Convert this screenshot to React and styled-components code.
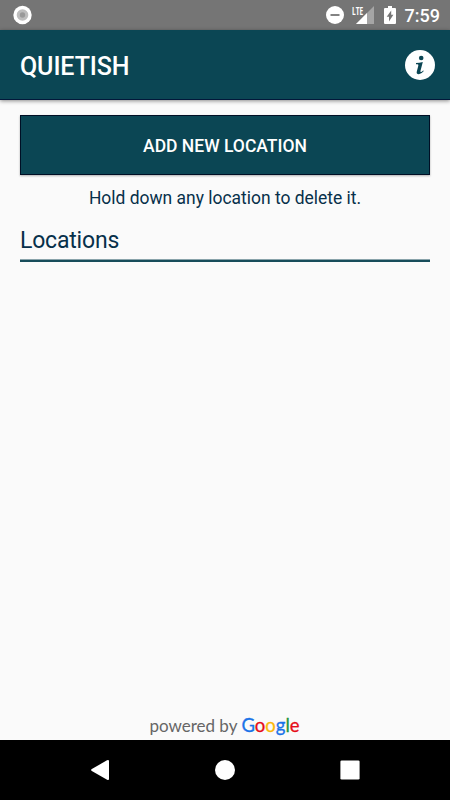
import React from 'react';
import styled, { createGlobalStyle } from 'styled-components';

const GlobalStyle = createGlobalStyle`
  * {
    box-sizing: border-box;
  }
  body {
    margin: 0;
    background-color: #fafafa;
    font-family: Roboto, 'Liberation Sans', sans-serif;
  }
  svg {
    display: block;
  }
`;

const Screen = styled.div`
  width: 450px;
  height: 800px;
  display: flex;
  flex-direction: column;
  overflow: hidden;
  background-color: #fafafa;
`;

const StatusBar = styled.div`
  height: 30px;
  flex-shrink: 0;
  display: flex;
  align-items: center;
  justify-content: space-between;
  padding: 0 10px 0 13px;
  background-color: #757575;
`;

const StatusIcons = styled.div`
  display: flex;
  align-items: center;
`;

const Network = styled.div`
  display: flex;
  align-items: flex-start;
  margin-left: 8px;
  height: 18px;
  svg {
    margin-left: -8px;
  }
`;

const NetworkType = styled.span`
  width: 12px;
  font-family: 'Open Sans', sans-serif;
  font-size: 11px;
  font-weight: 700;
  line-height: 10px;
  white-space: nowrap;
  color: white;
  transform: scaleX(0.6);
  transform-origin: left;
`;

const Battery = styled.div`
  margin-left: 10px;
`;

const Clock = styled.span`
  margin-left: 9px;
  padding-top: 2px;
  font-size: 18px;
  font-weight: 500;
  line-height: 28px;
  color: white;
`;

const Header = styled.header`
  height: 70px;
  flex-shrink: 0;
  display: flex;
  align-items: center;
  justify-content: space-between;
  padding: 0 15px 0 20px;
  background-color: #0b4654;
  border-bottom: 1px solid #02183a;
  box-shadow: 0 1px 4px rgba(0, 0, 0, 0.45);
`;

const Title = styled.h1`
  margin: 4px 0 0;
  font-size: 25px;
  font-weight: 500;
  line-height: 30px;
  letter-spacing: -0.1px;
  color: white;
`;

const InfoButton = styled.button`
  padding: 0;
  border: none;
  background: none;
  cursor: pointer;
`;

const Content = styled.main`
  flex: 1;
  display: flex;
  flex-direction: column;
  padding: 15px 20px 0;
`;

const AddButton = styled.button`
  height: 60px;
  padding: 2px 0 0;
  border: 1px solid #000f25;
  background-color: #0b4654;
  box-shadow: 0 1px 2px rgba(0, 0, 0, 0.3);
  color: white;
  font-family: inherit;
  font-size: 17.5px;
  font-weight: 500;
  cursor: pointer;
`;

const Hint = styled.p`
  margin: 12px 0 0;
  font-size: 17.45px;
  line-height: 22px;
  text-align: center;
  color: #07304a;
`;

const SectionTitle = styled.h2`
  margin: 17px 0 0;
  height: 36px;
  border-bottom: 2px solid #174c5a;
  box-shadow: inset 0 -1px rgba(23, 76, 90, 0.5);
  font-size: 23px;
  font-weight: 400;
  line-height: 29px;
  letter-spacing: -0.2px;
  color: #07304a;
`;

const PoweredBy = styled.div`
  height: 30px;
  display: flex;
  justify-content: center;
  align-items: baseline;
  gap: 4px;
  padding-right: 1px;
  font-family: Lato, sans-serif;
  font-size: 17px;
  line-height: 30px;
  color: #666;
`;

const Google = styled.span`
  font-size: 18.5px;
  -webkit-text-stroke: 0.3px;
`;

const Letter = styled.span`
  color: ${(props) => props.$color};
`;

const NavBar = styled.nav`
  height: 60px;
  flex-shrink: 0;
  display: flex;
  align-items: center;
  justify-content: center;
  background-color: black;
`;

const NavButton = styled.button`
  width: 125px;
  height: 60px;
  display: flex;
  align-items: center;
  justify-content: center;
  padding: 0;
  border: none;
  background: none;
`;

const googleLetters = [
  ['G', '#1a73e8'],
  ['o', '#e60c18'],
  ['o', '#fbb80a'],
  ['g', '#1a73e8'],
  ['l', '#1e9640'],
  ['e', '#e60c18'],
];

const RecordIcon = () => (
  <svg width="20" height="20" viewBox="0 0 20 20">
    <circle cx="9.5" cy="10" r="9.2" fill="#fff" />
    <circle cx="9.5" cy="10" r="5.8" fill="#bdbdbd" />
    <circle cx="9.5" cy="10" r="2.7" fill="#999" />
  </svg>
);

const DoNotDisturbIcon = () => (
  <svg width="18" height="18" viewBox="0 0 18 18">
    <circle cx="9" cy="9" r="9" fill="#fff" />
    <path d="M4.5 9h9" stroke="#757575" strokeWidth="1.8" />
  </svg>
);

const SignalIcon = () => (
  <svg width="18" height="18" viewBox="0 0 18 18">
    <path d="M18 0v18H0z" fill="#fff" fillOpacity="0.35" />
    <path d="M11 7v11H0z" fill="#fff" />
  </svg>
);

const BatteryIcon = () => (
  <svg width="12" height="18" viewBox="0 0 12 18">
    <path d="M4 0h4v2h3q1 0 1 1v14q0 1-1 1H1q-1 0-1-1V3q0-1 1-1h3z" fill="#fff" />
    <path d="M7.2 4.5v4.2h2.2L5 15.5v-4.8H2.7z" fill="#757575" />
  </svg>
);

const InfoIcon = () => (
  <svg width="30" height="30" viewBox="0 0 30 30">
    <circle cx="15" cy="15" r="15" fill="#fff" />
    <circle cx="16.2" cy="8" r="2.3" fill="#0b4654" />
    <path
      d="M11 13.1q3.4-.2 6.8-1l-2.3 8.7q-.3 1.3.4 1.3.8 0 2.2-1.6l.7.6q-2.4 3.2-5 3.2-2.7 0-2-2.8l1.5-5.8q.4-1.5-.7-1.5H11z"
      fill="#0b4654"
    />
  </svg>
);

const App = () => {
  return (
    <>
      <GlobalStyle />
      <Screen>
        <StatusBar>
          <RecordIcon />
          <StatusIcons>
            <DoNotDisturbIcon />
            <Network>
              <NetworkType>LTE</NetworkType>
              <SignalIcon />
            </Network>
            <Battery>
              <BatteryIcon />
            </Battery>
            <Clock>7:59</Clock>
          </StatusIcons>
        </StatusBar>
        <Header>
          <Title>QUIETISH</Title>
          <InfoButton aria-label="Info">
            <InfoIcon />
          </InfoButton>
        </Header>
        <Content>
          <AddButton>ADD NEW LOCATION</AddButton>
          <Hint>Hold down any location to delete it.</Hint>
          <SectionTitle>Locations</SectionTitle>
        </Content>
        <PoweredBy>
          <span>powered by</span>
          <Google>
            {googleLetters.map(([letter, color], i) => (
              <Letter key={i} $color={color}>{letter}</Letter>
            ))}
          </Google>
        </PoweredBy>
        <NavBar>
          <NavButton aria-label="Back">
            <svg width="20" height="20" viewBox="0 0 20 20">
              <path d="M18 0q1 0 1 1v18q0 1.3-1.4.9L1.8 11q-1.4-1 0-2L17 .3z" fill="#fff" />
            </svg>
          </NavButton>
          <NavButton aria-label="Home">
            <svg width="20" height="20" viewBox="0 0 20 20">
              <circle cx="10" cy="10" r="10" fill="#fff" />
            </svg>
          </NavButton>
          <NavButton aria-label="Recent apps">
            <svg width="20" height="20" viewBox="0 0 20 20">
              <rect x="0.4" y="0.4" width="19.2" height="19.2" rx="1.3" fill="#fff" />
            </svg>
          </NavButton>
        </NavBar>
      </Screen>
    </>
  );
};

export default App;
